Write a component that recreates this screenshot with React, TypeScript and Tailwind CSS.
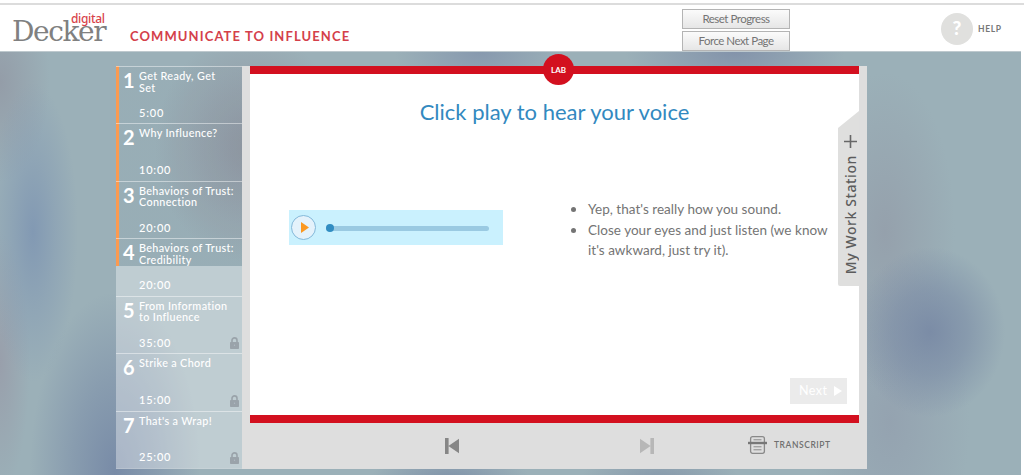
import React from 'react';

type Lesson = { title: string[]; time: string; locked?: boolean };

const lessons: Lesson[] = [
  { title: ['Get Ready, Get', 'Set'], time: '5:00' },
  { title: ['Why Influence?'], time: '10:00' },
  { title: ['Behaviors of Trust:', 'Connection'], time: '20:00' },
  { title: ['Behaviors of Trust:', 'Credibility'], time: '20:00' },
  { title: ['From Information', 'to Influence'], time: '35:00', locked: true },
  { title: ['Strike a Chord'], time: '15:00', locked: true },
  { title: ["That's a Wrap!"], time: '25:00', locked: true },
];

function Lock() {
  return (
    <svg width="9" height="12" viewBox="0 0 9 12" className="mr-[3px] mb-[4px] self-end text-[#9aa3aa]">
      <path d="M2 6V3.4a2.5 2.5 0 0 1 5 0V6" fill="none" stroke="currentColor" strokeWidth="1.6" />
      <rect x="0" y="5" width="9" height="7" rx="0.8" fill="currentColor" />
      <circle cx="4.5" cy="8.3" r="0.7" fill="#b0bac2" />
    </svg>
  );
}

function Header() {
  return (
    <header className="mt-[3px] flex h-[48px] shrink-0 border-t-2 border-[#dcdcdc] bg-white">
      <div className="relative ml-[12px] w-[118px]">
        <div className="mt-[10px] font-['DejaVu_Serif'] text-[28px] leading-[33px] tracking-[-1.4px] text-[#808080]">Decker</div>
        <div className="absolute top-[7px] left-[59px] font-['Noto_Sans'] text-[12px] leading-[14px] font-medium tracking-[-0.35px] text-[#d8434b]">digital</div>
      </div>
      <h1 className="mt-[22px] w-[552px] font-['Lato'] text-[13px] leading-[18px] font-bold tracking-[1.1px] whitespace-nowrap text-[#d4404a]">
        COMMUNICATE TO INFLUENCE
      </h1>
      <div className="mt-[4px] flex w-[108px] flex-col gap-[2px]">
        {['Reset Progress', 'Force Next Page'].map((label) => (
          <button
            key={label}
            className="h-[20px] w-[108px] border border-[#b4b4b4] bg-linear-to-b from-[#fbfbfb] to-[#e6e6e6] font-['Lato'] text-[11.5px] leading-[18px] tracking-[-0.5px] whitespace-nowrap text-[#747474]"
          >
            {label}
          </button>
        ))}
      </div>
      <div className="mt-[7px] ml-[151px] flex h-[33px] items-center gap-[5px]">
        <div className="flex size-[32px] items-center justify-center rounded-full bg-[#e0e0de] font-['Lato'] text-[19px] font-black text-white">?</div>
        <span className="mt-[2px] font-['Lato'] text-[8.5px] font-bold tracking-[0.6px] text-[#777]">HELP</span>
      </div>
    </header>
  );
}

function Sidebar() {
  return (
    <nav className="relative flex w-[126px] flex-col border-b border-white/45 bg-[linear-gradient(to_bottom,#8599a31f_200px,#ffffff5c_200px)] font-['Lato'] text-white">
      <div className="absolute top-0 left-0 h-[200px] w-[3px] bg-[#fb9a50]" />
      {lessons.map((lesson, i) => (
        <div key={i} className="relative flex min-h-0 flex-1 border-t border-white/45">
          <div className="w-[23px] pt-[1px] pl-[7px] text-[20px] leading-[24px] font-bold">{i + 1}</div>
          <div className="flex flex-1 flex-col justify-between pt-[3px] pb-[5px] text-[10.8px] leading-[11.5px] font-medium tracking-[0.35px] whitespace-nowrap">
            <div>
              {lesson.title.map((line) => (
                <div key={line}>{line}</div>
              ))}
            </div>
            <div className="text-[11px] tracking-[0.8px]">{lesson.time}</div>
          </div>
          {lesson.locked && <Lock />}
        </div>
      ))}
    </nav>
  );
}

function Player() {
  return (
    <div className="mt-[82px] ml-[39px] flex h-[35px] w-[214px] items-center bg-[#caf1fe] pl-[2px]">
      <div className="flex size-[25px] items-center justify-center rounded-full border-[1.5px] border-[#83b9da] bg-[#e4f2fb]">
        <svg width="8" height="11" viewBox="0 0 8 11" className="ml-[2px]">
          <path d="M0 0L8 5.5L0 11Z" fill="#fb9820" />
        </svg>
      </div>
      <div className="mt-px ml-[10px] flex h-[5px] w-[163px] items-center rounded-full bg-[#9acae2]">
        <div className="size-[8px] rounded-full bg-[#318dc2]" />
      </div>
    </div>
  );
}

function Workstation() {
  return (
    <div className="absolute top-[37px] right-0 flex h-[175px] w-[21px] flex-col items-center rounded-bl-[2px] bg-[#dfdfde] pt-[24px] [clip-path:polygon(0_17px,100%_0,100%_100%,0_100%)]">
      <svg width="13" height="13" viewBox="0 0 13 13" className="ml-[4px] shrink-0">
        <path d="M6.5 0v13M0 6.5h13" stroke="#676767" strokeWidth="1.6" />
      </svg>
      <span className="mt-[7px] ml-[4px] rotate-180 font-['Noto_Sans'] text-[14px] leading-[18px] font-medium tracking-[0.6px] whitespace-nowrap text-[#5c5c5c] [writing-mode:vertical-rl]">
        My Work Station
      </span>
    </div>
  );
}

function Skip({ flip = false }: { flip?: boolean }) {
  return (
    <svg width="14" height="16" viewBox="0 0 14 16" className={flip ? 'ml-[181px] rotate-180 text-[#b7b7b7]' : 'ml-[195px] text-[#868686]'}>
      <path d="M0 0H3.6V16H0ZM3.4 8L14 0.7V15.3Z" fill="currentColor" />
    </svg>
  );
}

function Footer() {
  return (
    <footer className="flex flex-1 items-center font-['Lato']">
      <Skip />
      <Skip flip />
      <svg width="19" height="18" viewBox="0 0 19 18" className="-mt-[2px] ml-[94px]" fill="none" stroke="#898989">
        <rect x="2.6" y="0.7" width="13.8" height="16.6" rx="2" strokeWidth="1.3" />
        <path d="M5.5 3.8h8M5.5 10.8h8M5.5 13.8h8" strokeWidth="1" />
        <path d="M0 7h19" stroke="#777" strokeWidth="2.4" />
      </svg>
      <span className="-mt-[2px] ml-[7px] text-[8.5px] font-semibold tracking-[0.55px] whitespace-nowrap text-[#707070]">TRANSCRIPT</span>
    </footer>
  );
}

export default function App() {
  return (
    <div className="flex h-[475px] w-[1024px] flex-col overflow-hidden bg-white">
      <Header />
      <div className="w-[1021px] flex-1 border-t border-[#bec9ce] bg-[#9bb0b8] bg-[radial-gradient(ellipse_75px_85px_at_930px_280px,#7b8ca6_0%,#7b8ca699_50%,#7b8ca600_100%),radial-gradient(ellipse_45px_150px_at_33px_180px,#8299b3_0%,#8299b377_50%,#8299b300_100%),radial-gradient(ellipse_85px_180px_at_115px_420px,#788ba7_0%,#788ba788_50%,#788ba700_100%),radial-gradient(ellipse_50px_100px_at_0px_30px,#9298a4cc_0%,#9298a400_100%),radial-gradient(ellipse_30px_130px_at_0px_310px,#989ba8cc_0%,#989ba800_100%),radial-gradient(ellipse_85px_45px_at_480px_0px,#8799ae_0%,#8799ae00_100%),radial-gradient(ellipse_110px_45px_at_735px_0px,#8393aa_0%,#8393aa00_100%),radial-gradient(ellipse_95px_115px_at_250px_95px,#8c8f9bdd_0%,#8c8f9b00_100%),radial-gradient(ellipse_70px_160px_at_885px_180px,#9299a6aa_0%,#9299a600_100%),radial-gradient(ellipse_80px_160px_at_890px_370px,#919cacaa_0%,#919cac00_100%),radial-gradient(ellipse_80px_35px_at_450px_430px,#7e91a8_0%,#7e91a800_100%),radial-gradient(ellipse_80px_35px_at_660px_430px,#8698aa_0%,#8698aa00_100%)]">
        <div className="mt-[14px] ml-[116px] flex h-[403px] w-[751px]">
          <Sidebar />
          <main className="flex flex-1 flex-col bg-[#dedede] px-[8px]">
            <section className="relative flex h-[357px] flex-col border-y-[8px] border-[#d3101f] bg-white">
              <div className="absolute top-[-20px] left-[293px] flex size-[31px] items-center justify-center rounded-full bg-[#d3101f] pt-px font-['Lato'] text-[8px] font-bold text-white">LAB</div>
              <h2 className="mt-[22px] text-center font-['Lato'] text-[22px] leading-[32px] whitespace-nowrap text-[#3289c0]">
                Click play to hear your voice
              </h2>
              <div className="flex">
                <Player />
                <ul className="mt-[70px] ml-[85px] w-[250px] list-disc font-['Lato'] text-[13.5px] leading-[20.2px] tracking-[0.03px] whitespace-nowrap text-[#747474] marker:text-[16px]">
                  <li>Yep, that's really how you sound.</li>
                  <li>Close your eyes and just listen (we know<br />it's awkward, just try it).</li>
                </ul>
              </div>
              <button className="mt-auto mr-[12px] mb-[11px] flex h-[26px] w-[57px] items-center gap-[6px] self-end bg-[#ebebeb] pl-[9px] font-['Lato'] text-[12.5px] tracking-[0.5px] text-white">
                Next
                <svg width="8" height="10" viewBox="0 0 8 10"><path d="M0 0L8 5L0 10Z" fill="white" /></svg>
              </button>
              <Workstation />
            </section>
            <Footer />
          </main>
        </div>
      </div>
    </div>
  );
}
